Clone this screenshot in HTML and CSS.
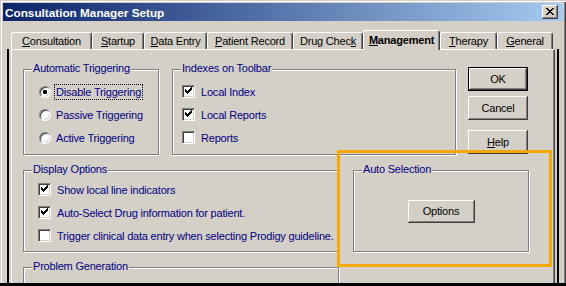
FILE: index.html
```html
<!DOCTYPE html>
<html lang="en">
<head>
  <meta charset="UTF-8" />
  <title>Consultation Manager Setup</title>
  <link rel="stylesheet" href="styles.css">
</head>
<body>
  <div class="window">
    <div class="titlebar">
      <span class="title">Consultation Manager Setup</span>
      <span class="close">
        <svg width="16" height="14" viewBox="0 0 16 14" shape-rendering="crispEdges">
          <path d="M4 3h2v1h-2z M10 3h2v1h-2z M5 4h2v1h-2z M9 4h2v1h-2z M6 5h4v1h-4z M7 6h2v1h-2z M6 7h4v1h-4z M5 8h2v1h-2z M9 8h2v1h-2z M4 9h2v1h-2z M10 9h2v1h-2z" fill="#000"/>
        </svg>
      </span>
    </div>

    <div class="dialog">
      <div class="tabs">
        <div class="tab t-consult"><u>C</u>onsultation</div>
        <div class="tab t-startup"><u>S</u>tartup</div>
        <div class="tab t-data"><u>D</u>ata Entry</div>
        <div class="tab t-patient"><u>P</u>atient Record</div>
        <div class="tab t-drug">Drug Chec<u>k</u></div>
        <div class="tab t-manage active"><u>M</u>anagement</div>
        <div class="tab t-therapy"><u>T</u>herapy</div>
        <div class="tab t-general"><u>G</u>eneral</div>
      </div>

      <div class="panel">
        <div class="row-top">
          <div class="group trigger">
            <span class="legend">Automatic Triggering</span>
            <div class="option"><span class="radio checked"></span><span class="text focus">Disable Triggering</span></div>
            <div class="option"><span class="radio"></span><span class="text">Passive Triggering</span></div>
            <div class="option"><span class="radio"></span><span class="text">Active Triggering</span></div>
          </div>

          <div class="group indexes">
            <span class="legend">Indexes on Toolbar</span>
            <div class="option"><span class="check checked"><svg width="13" height="13" viewBox="0 0 13 13" shape-rendering="crispEdges"><path d="M3 4h1v3h-1z M4 5h1v3h-1z M5 6h1v3h-1z M6 5h1v3h-1z M7 4h1v3h-1z M8 3h1v3h-1z M9 2h1v3h-1z" fill="#000"/></svg></span><span class="text">Local Index</span></div>
            <div class="option"><span class="check checked"><svg width="13" height="13" viewBox="0 0 13 13" shape-rendering="crispEdges"><path d="M3 4h1v3h-1z M4 5h1v3h-1z M5 6h1v3h-1z M6 5h1v3h-1z M7 4h1v3h-1z M8 3h1v3h-1z M9 2h1v3h-1z" fill="#000"/></svg></span><span class="text">Local Reports</span></div>
            <div class="option"><span class="check"></span><span class="text">Reports</span></div>
          </div>

          <div class="buttons">
            <div class="btn default">OK</div>
            <div class="btn cancel">Cancel</div>
            <div class="btn help"><u>H</u>elp</div>
          </div>
        </div>

        <div class="row-bottom">
          <div class="left-col">
            <div class="group display">
              <span class="legend">Display Options</span>
              <div class="option"><span class="check checked"><svg width="13" height="13" viewBox="0 0 13 13" shape-rendering="crispEdges"><path d="M3 4h1v3h-1z M4 5h1v3h-1z M5 6h1v3h-1z M6 5h1v3h-1z M7 4h1v3h-1z M8 3h1v3h-1z M9 2h1v3h-1z" fill="#000"/></svg></span><span class="text">Show local line indicators</span></div>
              <div class="option"><span class="check checked"><svg width="13" height="13" viewBox="0 0 13 13" shape-rendering="crispEdges"><path d="M3 4h1v3h-1z M4 5h1v3h-1z M5 6h1v3h-1z M6 5h1v3h-1z M7 4h1v3h-1z M8 3h1v3h-1z M9 2h1v3h-1z" fill="#000"/></svg></span><span class="text">Auto-Select Drug information for patient.</span></div>
              <div class="option"><span class="check"></span><span class="text">Trigger clinical data entry when selecting Prodigy guideline.</span></div>
            </div>

            <div class="group problem">
              <span class="legend">Problem Generation</span>
              <div class="option"><span class="radio"></span><span class="text">Use and Problem Generation</span></div>
            </div>
          </div>

          <div class="group auto">
            <span class="legend">Auto Selection</span>
            <div class="btn options">Options</div>
          </div>
        </div>

        <div class="highlight"></div>
      </div>
    </div>
  </div>
</body>
</html>
```

FILE: styles.css
```css
* {
  box-sizing: border-box;
}

body {
  margin: 0;
  background: #d4d0c8;
  font-family: "Liberation Sans", Arial, sans-serif;
  font-size: 11px;
  letter-spacing: -0.2px;
  color: #000;
}

.window {
  width: 566px;
  height: 286px;
  overflow: hidden;
  padding: 3px 3px 0;
  border-bottom: 3px solid #000;
  box-shadow: inset 1px 1px #d4d0c8, inset 2px 2px #fff, inset -1px 0 #404040, inset -2px 0 #808080;
}

/* title bar */

.titlebar {
  height: 18px;
  display: flex;
  align-items: center;
  justify-content: space-between;
  padding: 0 5px 0 2px;
  background: linear-gradient(to right, #0a246a, #a6caf0);
}

.title {
  color: #fff;
  font-weight: bold;
  font-size: 11.75px;
  letter-spacing: 0;
}

.close {
  width: 16px;
  height: 14px;
  display: flex;
  background: #d4d0c8;
  box-shadow: inset -1px -1px #404040, inset 1px 1px #fff, inset -2px -2px #808080;
}

/* tabs */

.dialog {
  padding: 9px 8px 0;
}

.tabs {
  display: flex;
  align-items: flex-end;
  height: 19px;
  position: relative;
  z-index: 1;
}

.tab {
  height: 17px;
  display: flex;
  align-items: center;
  justify-content: center;
  background: #d4d0c8;
  border-top: 1px solid #fff;
  border-left: 1px solid #fff;
  border-right: 1px solid #404040;
  border-radius: 3px 3px 0 0;
  box-shadow: inset -1px 0 #808080;
  white-space: nowrap;
}

.tab.active {
  height: 20px;
  margin-bottom: -1px;
  padding-bottom: 2px;
  font-weight: bold;
}

.t-consult { width: 81px; }
.t-startup { width: 52px; }
.t-data { width: 63px; }
.t-patient { width: 86px; }
.t-drug { width: 70px; }
.t-manage { width: 77px; }
.t-therapy { width: 57px; }
.t-general { width: 56px; }

/* panel */

.panel {
  position: relative;
  height: 300px;
  padding: 0 0 0 11px;
  border-top: 1px solid #fff;
  border-left: 1px solid #fff;
  border-right: 1px solid #404040;
  box-shadow: inset -1px 0 #808080, -2px 0 #d4d0c8, 2px 0 #d4d0c8, -4px 0 #000, 4px 0 #000;
}

.row-top {
  display: flex;
  align-items: flex-start;
  margin-top: 17px;
}

.row-bottom {
  display: flex;
  align-items: flex-start;
  margin-top: 15px;
}

.group {
  position: relative;
  border: 1px solid #808080;
  box-shadow: inset 1px 1px #fff, 1px 1px #fff;
}

.legend {
  position: absolute;
  top: -8px;
  left: 8px;
  padding: 0 1px;
  line-height: 13px;
  background: #d4d0c8;
  color: #000080;
  white-space: nowrap;
}

.trigger {
  width: 136px;
  height: 86px;
  margin-top: 2px;
  padding: 10px 0 0 15px;
}

.indexes {
  width: 284px;
  height: 86px;
  margin-top: 2px;
  margin-left: 13px;
  padding: 10px 0 0 9px;
}

.left-col {
  width: 316px;
}

.display {
  height: 82px;
  padding: 7px 0 0 14px;
}

.problem {
  height: 60px;
  margin-top: 15px;
  padding: 11px 0 0 16px;
}

.auto {
  width: 176px;
  height: 82px;
  margin-left: 14px;
  display: flex;
  align-items: center;
  justify-content: center;
}

.option {
  height: 23px;
  display: flex;
  align-items: center;
  gap: 3px;
  color: #000080;
  white-space: nowrap;
}

.indexes .option,
.display .option {
  gap: 4px;
}

.text {
  padding: 0 1px;
  line-height: 14px;
  border: 1px solid transparent;
}

.text.focus {
  border: 1px dotted #000;
}

.radio {
  position: relative;
  width: 12px;
  height: 12px;
  flex: none;
  border-radius: 50%;
  background: #fff;
  border: 1px solid;
  border-color: #808080 #fff #fff #808080;
  box-shadow: inset 1px 1px #404040, inset -1px -1px #d4d0c8;
}

.radio.checked::after {
  content: "";
  position: absolute;
  left: 3px;
  top: 3px;
  width: 4px;
  height: 4px;
  border-radius: 1px;
  background: #000;
}

.check {
  width: 13px;
  height: 13px;
  flex: none;
  display: flex;
  background: #fff;
  border: 1px solid;
  border-color: #808080 #fff #fff #808080;
  box-shadow: inset 1px 1px #404040, inset -1px -1px #d4d0c8;
}

.check svg {
  margin: -1px;
}

/* buttons */

.buttons {
  display: flex;
  flex-direction: column;
  margin-left: 12px;
}

.btn {
  width: 60px;
  height: 24px;
  display: flex;
  align-items: center;
  justify-content: center;
  background: #d4d0c8;
  box-shadow: inset -1px -1px #404040, inset 1px 1px #fff, inset -2px -2px #808080;
}

.btn.default {
  border: 1px solid #000;
}

.btn.cancel {
  margin-top: 5px;
}

.btn.help {
  margin-top: 10px;
}

.btn.options {
  width: 67px;
  height: 23px;
}

.highlight {
  position: absolute;
  left: 325px;
  top: 100px;
  width: 215px;
  height: 117px;
  border: 3px solid #f5a800;
}
```
